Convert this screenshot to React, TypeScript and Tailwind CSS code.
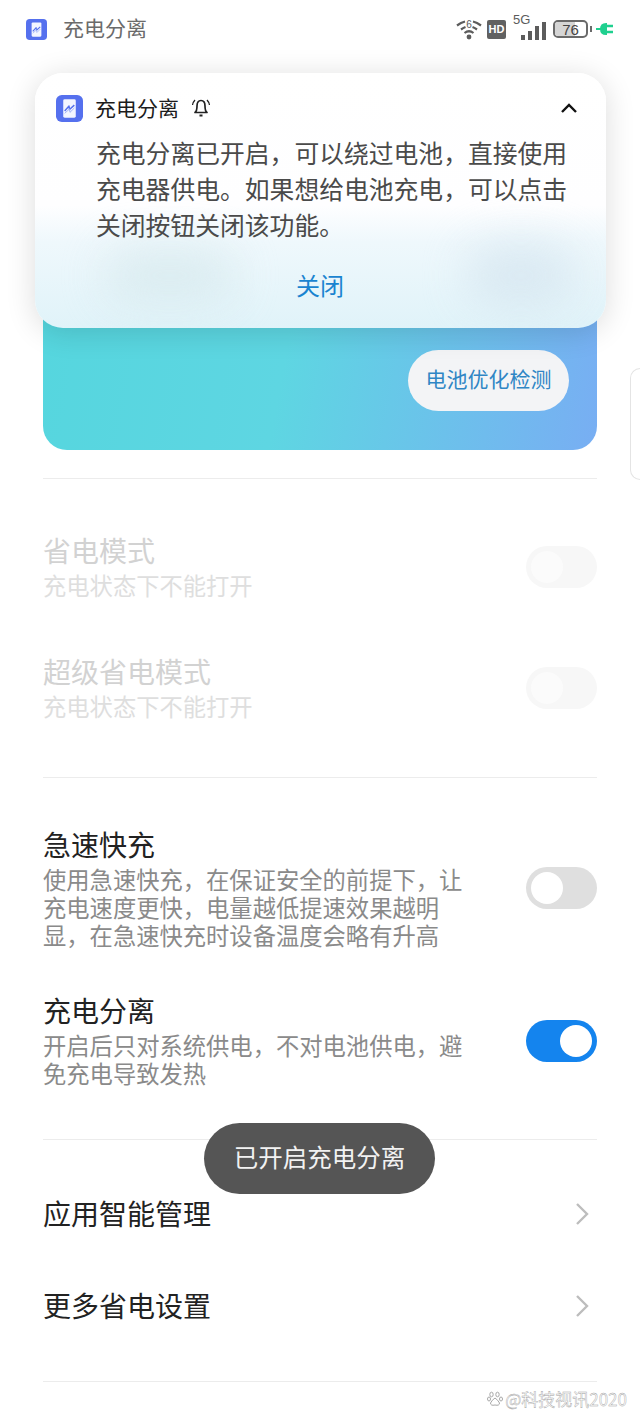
import React from "react";

const font = { fontFamily: '"Noto Sans CJK SC", "Noto Sans", sans-serif' };

function AppIcon({ size, radius }: { size: number; radius: number }) {
  return (
    <svg width={size} height={size} viewBox="0 0 28 28" className="shrink-0">
      <rect width="28" height="28" rx={radius} fill="#5570ee" />
      <rect x="7.5" y="4.5" width="13" height="19" rx="1.5" fill="#f3f5ff" />
      <path d="M9 16.5 13.5 11.5 14 15 19 10.5" fill="none" stroke="#5570ee" strokeWidth="1.5" strokeLinejoin="round" />
      <path d="M9 19 14 14.5 14.5 18 19 13.5" fill="none" stroke="#9fb0f5" strokeWidth="1" strokeLinejoin="round" />
    </svg>
  );
}

function StatusIcons() {
  return (
    <div className="flex items-center">
      <svg width="26" height="22" viewBox="0 0 26 22" className="mr-[5px]">
        <g fill="none" stroke="#5c5c5c" strokeWidth="2.2">
          <path d="M1 7.5Q5 4.5 9 3.5" />
          <path d="M17 3.5Q21 4.5 25 7.5" />
          <path d="M5 11.5Q7 10 9.5 9" />
          <path d="M16.5 9Q19 10 21 11.5" />
          <path d="M8.5 15Q13 11.5 17.5 15" />
        </g>
        <circle cx="13" cy="19" r="2.4" fill="#5c5c5c" />
        <text x="13" y="10" textAnchor="middle" fontSize="10" fill="#5c5c5c" fontFamily="Liberation Sans">6</text>
      </svg>
      <div className="flex h-[19px] w-[19px] items-center justify-center rounded-[2px] bg-[#616161] text-[11px] font-bold leading-none text-white [font-family:'Liberation_Sans',sans-serif]">
        HD
      </div>
      <div className="relative ml-[7px] h-[24px] w-[33px]">
        <span className="absolute left-0 top-[-4px] text-[13px] leading-[14px] text-[#5c5c5c] [font-family:'Liberation_Sans',sans-serif]">5G</span>
        <div className="absolute bottom-[1px] right-0 flex items-end gap-[3px]">
          <div className="h-[5px] w-[4px] bg-[#5c5c5c]" />
          <div className="h-[9px] w-[4px] bg-[#5c5c5c]" />
          <div className="h-[14px] w-[4px] bg-[#5c5c5c]" />
          <div className="h-[18px] w-[4px] bg-[#5c5c5c]" />
        </div>
      </div>
      <div className="relative ml-[7px] flex h-[18px] w-[35px] items-center justify-center overflow-hidden rounded-[5px] border-2 border-[#6a6a6a] text-[15px] leading-none text-[#444] [font-family:'Liberation_Sans',sans-serif]">
        <div className="absolute inset-y-0 left-0 w-[20px] bg-[#d5d5d5]" />
        <span className="relative">76</span>
      </div>
      <div className="ml-[2px] h-[6px] w-[2px] bg-[#6a6a6a]" />
      <svg width="17" height="16" viewBox="0 0 17 16" className="ml-[4px]">
        <path d="M0 8H6" stroke="#1fd08f" strokeWidth="2" />
        <path d="M4 8Q4 2 10 2H11V14H10Q4 14 4 8Z" fill="#1fd08f" />
        <path d="M11 5H17M11 11H17" stroke="#1fd08f" strokeWidth="2.6" />
      </svg>
    </div>
  );
}

function Toggle({ state }: { state: "off" | "on" | "disabled" }) {
  if (state === "on") {
    return (
      <div className="flex h-[42px] w-[71px] shrink-0 items-center justify-end rounded-full bg-[#1484ee] pr-[5px]">
        <div className="h-[32px] w-[32px] rounded-full bg-white" />
      </div>
    );
  }
  return (
    <div className={`flex h-[42px] w-[71px] shrink-0 items-center rounded-full pl-[5px] ${state === "off" ? "bg-[#dfdfdf]" : "bg-[#f7f7f7]"}`}>
      <div className={`h-[32px] w-[32px] rounded-full ${state === "off" ? "bg-white" : "bg-[#fbfbfb]"}`} />
    </div>
  );
}

function Chevron() {
  return (
    <svg width="14" height="24" viewBox="0 0 14 24" className="mr-[8px] mt-[2px]">
      <path d="M2 2 12 12 2 22" fill="none" stroke="#bdbdbd" strokeWidth="2.4" />
    </svg>
  );
}

function DisabledRow({ title, className }: { title: string; className: string }) {
  return (
    <div className={`flex items-start justify-between ${className}`}>
      <div>
        <div className="text-[28px] leading-[38px] text-[#d2d2d2]">{title}</div>
        <div className="text-[23.3px] leading-[32px] text-[#dedede]">充电状态下不能打开</div>
      </div>
      <div className="pt-[15px]">
        <Toggle state="disabled" />
      </div>
    </div>
  );
}

export default function App() {
  return (
    <div style={font} className="relative h-[1422px] w-[640px] overflow-hidden bg-white">
      {/* status bar */}
      <div className="flex h-[58px] items-center justify-between pl-[26px] pr-[27px]">
        <div className="flex items-center gap-[16px]">
          <AppIcon size={21} radius={5} />
          <span className="mt-[-4px] text-[21px] leading-[28px] text-[#6b6b6b]">充电分离</span>
        </div>
        <StatusIcons />
      </div>

      {/* page */}
      <div className="px-[43px]">
        <div className="mt-[142px] flex h-[250px] items-end justify-end rounded-[24px] bg-[linear-gradient(100deg,#55d6de_0%,#5ed6e2_45%,#78aef3_100%)] pb-[39px] pr-[28px]">
          <div className="flex h-[61px] w-[161px] items-center justify-center rounded-full bg-[#f3f4f6] pb-[4px] text-[21px] leading-none text-[#2f86c5]">
            电池优化检测
          </div>
        </div>
        <div className="mt-[28px] h-px bg-[#ececec]" />

        <DisabledRow title="省电模式" className="mt-[52px]" />
        <DisabledRow title="超级省电模式" className="mt-[51px]" />
        <div className="mt-[55px] h-px bg-[#ececec]" />

        <div className="mt-[47px] flex items-start justify-between">
          <div className="w-[430px]">
            <div className="text-[28px] leading-[38px] text-[#222]">急速快充</div>
            <div className="mt-[2px] text-[23.3px] leading-[28px] text-[#8a8a8a]">
              <div>使用急速快充，在保证安全的前提下，让</div>
              <div>充电速度更快，电量越低提速效果越明</div>
              <div>显，在急速快充时设备温度会略有升高</div>
            </div>
          </div>
          <div className="pt-[42px]">
            <Toggle state="off" />
          </div>
        </div>

        <div className="mt-[42px] flex items-start justify-between">
          <div className="w-[430px]">
            <div className="text-[28px] leading-[38px] text-[#222]">充电分离</div>
            <div className="mt-[2px] text-[23.3px] leading-[28px] text-[#8a8a8a]">
              <div>开启后只对系统供电，不对电池供电，避</div>
              <div>免充电导致发热</div>
            </div>
          </div>
          <div className="pt-[29px]">
            <Toggle state="on" />
          </div>
        </div>

        <div className="mt-[52px] h-px bg-[#ececec]" />

        <div className="mt-[50px] flex h-[46px] items-center justify-between">
          <span className="text-[28px] leading-[38px] text-[#222]">应用智能管理</span>
          <Chevron />
        </div>
        <div className="mt-[46px] flex h-[46px] items-center justify-between">
          <span className="text-[28px] leading-[38px] text-[#222]">更多省电设置</span>
          <Chevron />
        </div>
        <div className="mt-[53px] h-px bg-[#ececec]" />
      </div>

      {/* notification */}
      <div className="absolute left-[35px] top-[73px] h-[255px] w-[571px] overflow-hidden rounded-[28px] bg-[linear-gradient(180deg,#ffffff_0%,#fefeff_52%,#eff8fc_66%,#e0f3f9_100%)] shadow-[0_4px_30px_rgba(0,0,0,0.14)]">
        <div className="absolute left-[70px] top-[175px] h-[55px] w-[130px] rounded-full bg-[#d5e8ec] opacity-70 blur-[22px]" />
        <div className="absolute right-[30px] top-[170px] h-[65px] w-[110px] rounded-full bg-[#d6e6f0] opacity-80 blur-[22px]" />
        <div className="relative flex h-[70px] items-center pl-[21px] pr-[27px]">
          <AppIcon size={27} radius={6} />
          <span className="ml-[12px] mt-[-3px] text-[21px] leading-[28px] text-[#1c1c1c]">充电分离</span>
          <svg width="20" height="20" viewBox="0 0 20 20" className="ml-[12px]">
            <path d="M4 14.5Q6 13 6 8Q6 2.5 10 2.5Q14 2.5 14 8Q14 13 16 14.5Z" fill="none" stroke="#222" strokeWidth="1.7" strokeLinejoin="round" />
            <path d="M8.5 17.5H11.5" stroke="#222" strokeWidth="2" />
            <path d="M1.5 7Q2 4 4 2M18.5 7Q18 4 16 2" fill="none" stroke="#222" strokeWidth="1.3" />
          </svg>
          <svg width="18" height="12" viewBox="0 0 18 12" className="ml-auto mr-[1px]">
            <path d="M2 10 9 3 16 10" fill="none" stroke="#111" strokeWidth="2.4" />
          </svg>
        </div>
        <div className="relative mt-[-9px] pl-[61px] text-[24.8px] leading-[36px] text-[#4a4a4a]">
          <div>充电分离已开启，可以绕过电池，直接使用</div>
          <div>充电器供电。如果想给电池充电，可以点击</div>
          <div>关闭按钮关闭该功能。</div>
        </div>
        <div className="relative mt-[27px] pr-[1px] text-center text-[24px] leading-[32px] text-[#1a84d0]">关闭</div>
      </div>

      {/* side handle */}
      <div className="absolute right-0 top-[368px] h-[112px] w-[10px] rounded-l-[12px] border border-r-0 border-[#e4e4e4]" />

      {/* toast */}
      <div className="absolute left-[204px] top-[1123px] flex h-[71px] w-[231px] items-center justify-center rounded-full bg-[#555555] pb-[2px] text-[24.5px] leading-none text-[#f2f2f2]">
        已开启充电分离
      </div>

      {/* watermark */}
      <div className="absolute bottom-[13px] right-[13px] flex items-center gap-[2px]">
        <svg width="16" height="16" viewBox="0 0 16 16">
          <g fill="none" stroke="#a8a8a8" strokeWidth="1">
            <ellipse cx="4.5" cy="3.5" rx="1.7" ry="2.3" />
            <ellipse cx="10.5" cy="3.5" rx="1.7" ry="2.3" />
            <ellipse cx="2" cy="8" rx="1.5" ry="2" />
            <ellipse cx="14" cy="8" rx="1.5" ry="2" />
            <path d="M8 7Q5 9 3.5 12Q3.5 15 8 14Q12.5 15 12.5 12Q11 9 8 7Z" />
          </g>
        </svg>
        <span className="text-[17px] leading-[20px] text-white/80 [-webkit-text-stroke:0.4px_#a0a0a0]">@科技视讯2020</span>
      </div>
    </div>
  );
}
